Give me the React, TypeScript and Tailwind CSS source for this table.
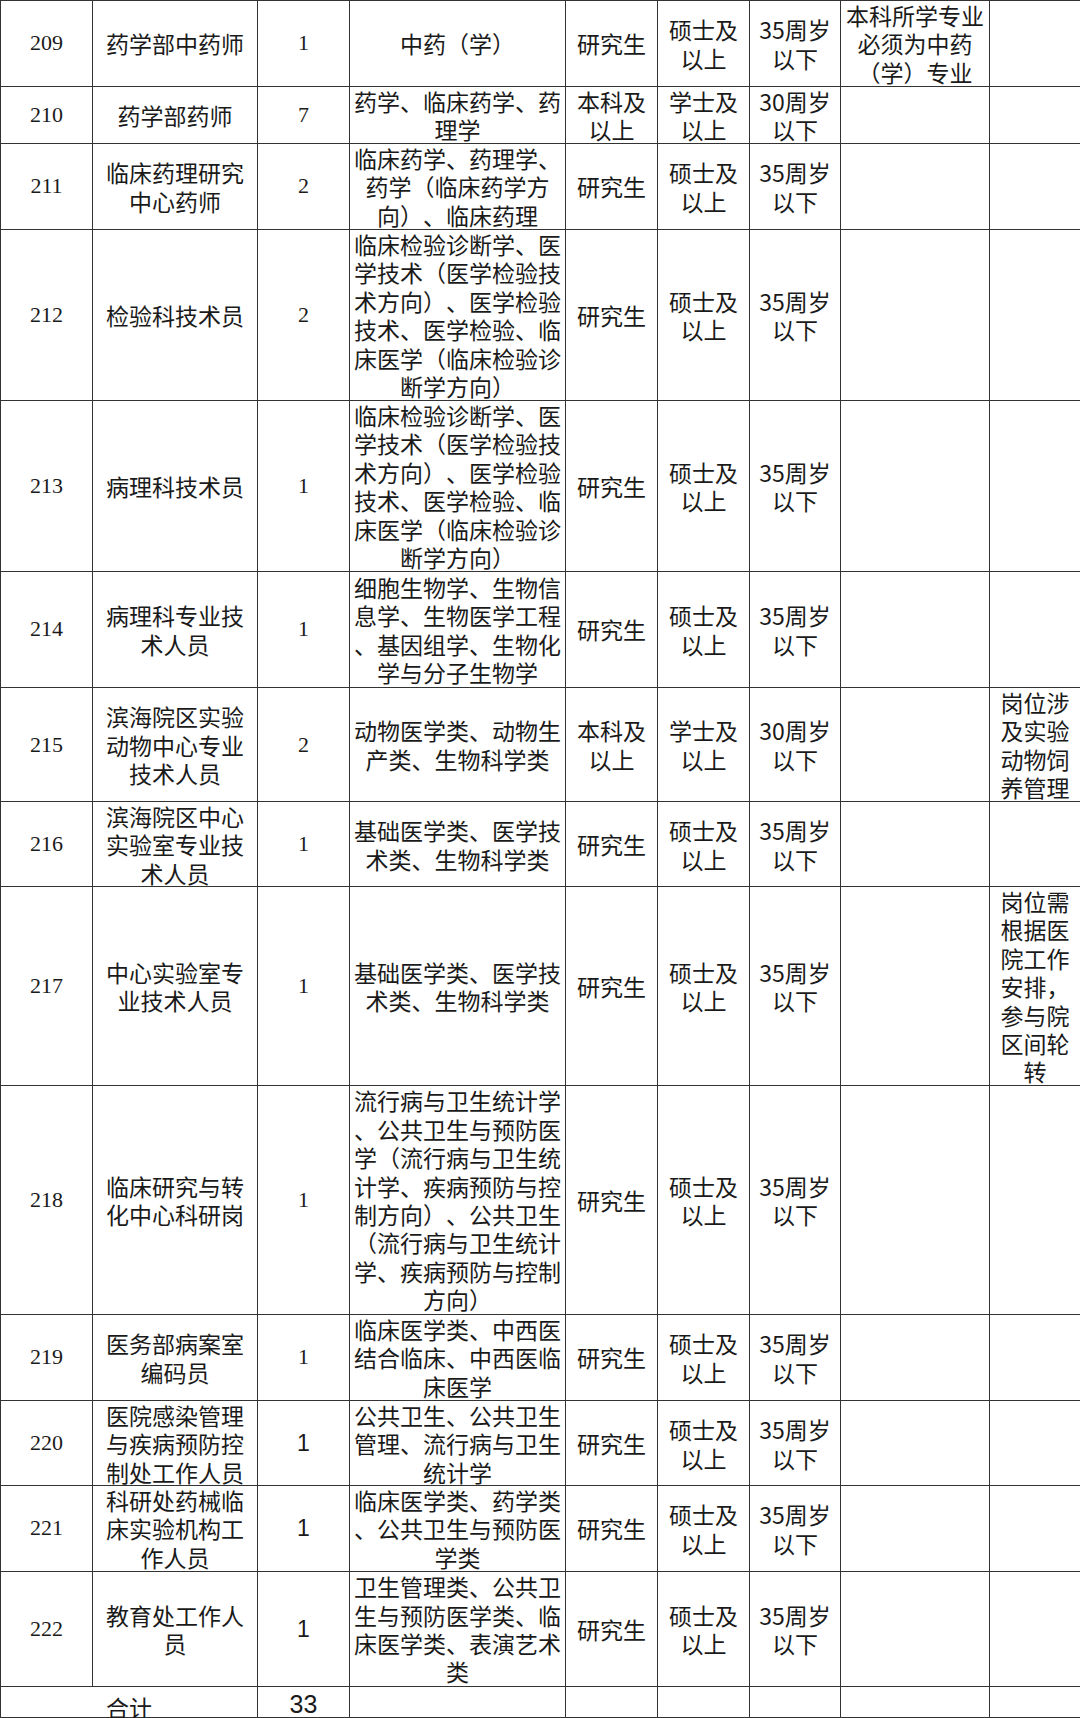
type Row = {
  no: string;
  name: string[];
  cnt: string;
  cntSans?: boolean;
  major: string[];
  edu: string[];
  deg: string[];
  age: string[];
  req?: string[];
  note?: string[];
  h: string;
};

const grad = { edu: ["研究生"], deg: ["硕士及", "以上"], age: ["35周岁", "以下"] };
const lab = ["临床检验诊断学、医", "学技术（医学检验技", "术方向）、医学检验", "技术、医学检验、临", "床医学（临床检验诊", "断学方向）"];

const rows: Row[] = [
  { no: "209", name: ["药学部中药师"], cnt: "1", major: ["中药（学）"], ...grad, req: ["本科所学专业", "必须为中药", "（学）专业"], h: "h-[86px]" },
  { no: "210", name: ["药学部药师"], cnt: "7", major: ["药学、临床药学、药", "理学"], edu: ["本科及", "以上"], deg: ["学士及", "以上"], age: ["30周岁", "以下"], h: "h-[57px]" },
  { no: "211", name: ["临床药理研究", "中心药师"], cnt: "2", major: ["临床药学、药理学、", "药学（临床药学方", "向）、临床药理"], ...grad, h: "h-[86px]" },
  { no: "212", name: ["检验科技术员"], cnt: "2", major: lab, ...grad, h: "h-[171px]" },
  { no: "213", name: ["病理科技术员"], cnt: "1", major: lab, ...grad, h: "h-[171px]" },
  { no: "214", name: ["病理科专业技", "术人员"], cnt: "1", major: ["细胞生物学、生物信", "息学、生物医学工程", "、基因组学、生物化", "学与分子生物学"], ...grad, h: "h-[116px]" },
  { no: "215", name: ["滨海院区实验", "动物中心专业", "技术人员"], cnt: "2", major: ["动物医学类、动物生", "产类、生物科学类"], edu: ["本科及", "以上"], deg: ["学士及", "以上"], age: ["30周岁", "以下"], note: ["岗位涉", "及实验", "动物饲", "养管理"], h: "h-[114px]" },
  { no: "216", name: ["滨海院区中心", "实验室专业技", "术人员"], cnt: "1", major: ["基础医学类、医学技", "术类、生物科学类"], ...grad, h: "h-[85px]" },
  { no: "217", name: ["中心实验室专", "业技术人员"], cnt: "1", major: ["基础医学类、医学技", "术类、生物科学类"], ...grad, note: ["岗位需", "根据医", "院工作", "安排，", "参与院", "区间轮", "转"], h: "h-[199px]" },
  { no: "218", name: ["临床研究与转", "化中心科研岗"], cnt: "1", major: ["流行病与卫生统计学", "、公共卫生与预防医", "学（流行病与卫生统", "计学、疾病预防与控", "制方向）、公共卫生", "（流行病与卫生统计", "学、疾病预防与控制", "方向）"], ...grad, h: "h-[229px]" },
  { no: "219", name: ["医务部病案室", "编码员"], cnt: "1", major: ["临床医学类、中西医", "结合临床、中西医临", "床医学"], ...grad, h: "h-[86px]" },
  { no: "220", name: ["医院感染管理", "与疾病预防控", "制处工作人员"], cnt: "1", cntSans: true, major: ["公共卫生、公共卫生", "管理、流行病与卫生", "统计学"], ...grad, h: "h-[85px]" },
  { no: "221", name: ["科研处药械临", "床实验机构工", "作人员"], cnt: "1", cntSans: true, major: ["临床医学类、药学类", "、公共卫生与预防医", "学类"], ...grad, h: "h-[86px]" },
  { no: "222", name: ["教育处工作人", "员"], cnt: "1", cntSans: true, major: ["卫生管理类、公共卫", "生与预防医学类、临", "床医学类、表演艺术", "类"], ...grad, h: "h-[115px]" },
];

const cols = "grid grid-cols-[92px_165px_92px_216px_92px_92px_91px_149px_91px]";
const cell = "flex flex-col items-center justify-center border-r border-[#333] text-center leading-[28.4px] overflow-visible";

function Lines({ lines }: { lines?: string[] }) {
  if (!lines) return null;
  return (
    <>
      {lines.map((l, i) => (
        <div key={i} className="whitespace-nowrap">
          {l}
        </div>
      ))}
    </>
  );
}

export default function App() {
  return (
    <div className="w-[1080px] h-[1718px] overflow-hidden bg-white text-[#1a1a1a] text-[23px] font-['Noto_Sans_CJK_SC',sans-serif] [text-spacing-trim:space-all] [font-feature-settings:'fwid'_0]">
      <div className="border-t border-l border-[#333]">
        {rows.map((r) => (
          <div key={r.no} className={`${cols} ${r.h} border-b border-[#333]`}>
            <div className={`${cell} font-['Liberation_Serif',serif] text-[22px]`}>{r.no}</div>
            <div className={cell}>
              <Lines lines={r.name} />
            </div>
            <div className={`${cell} ${r.cntSans ? "font-['Liberation_Sans',sans-serif] text-[23px]" : "font-['Liberation_Serif',serif] text-[22px]"}`}>
              {r.cnt}
            </div>
            <div className={cell}>
              <Lines lines={r.major} />
            </div>
            <div className={cell}>
              <Lines lines={r.edu} />
            </div>
            <div className={cell}>
              <Lines lines={r.deg} />
            </div>
            <div className={cell}>
              <Lines lines={r.age} />
            </div>
            <div className={cell}>
              <Lines lines={r.req} />
            </div>
            <div className={cell}>
              <Lines lines={r.note} />
            </div>
          </div>
        ))}
        {/* 合计 */}
        <div className={`${cols} h-[31px] border-b border-[#333]`}>
          <div className={`${cell} col-span-2 pt-[6px]`}>合计</div>
          <div className={`${cell} font-['Liberation_Sans',sans-serif] text-[25px]`}>33</div>
          <div className={cell} />
          <div className={cell} />
          <div className={cell} />
          <div className={cell} />
          <div className={cell} />
          <div className={cell} />
        </div>
      </div>
    </div>
  );
}
